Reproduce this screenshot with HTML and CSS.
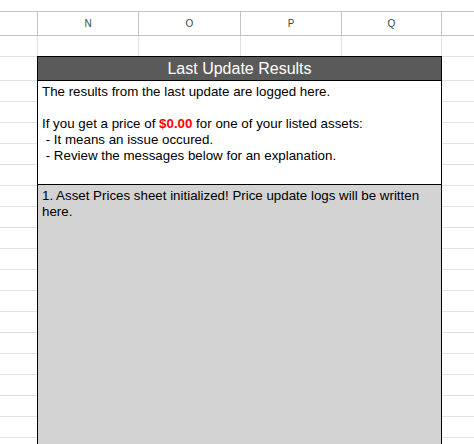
FILE: index.html
```html
<!DOCTYPE html>
<html>
<head>
<meta charset="utf-8">
<link rel="stylesheet" href="styles.css">
</head>
<body>
<div class="sheet">
  <div class="topgap"></div>
  <div class="colhead">
    <div class="c c0"></div>
    <div class="c c1">N</div>
    <div class="c c2">O</div>
    <div class="c c3">P</div>
    <div class="c c4">Q</div>
    <div class="c c5"></div>
  </div>
  <div class="row1">
    <div class="c c0"></div>
    <div class="c c1"></div>
    <div class="c c2"></div>
    <div class="c c3"></div>
    <div class="c c4"></div>
    <div class="c c5"></div>
  </div>
  <div class="main">
    <div class="side side-left">
      <div class="side-first"></div>
      <div class="side-rest"></div>
    </div>
    <div class="box">
      <div class="box-title">Last Update Results</div>
      <div class="box-info">
        <div>The results from the last update are logged here.</div>
        <div>&nbsp;</div>
        <div>If you get a price of <span class="red">$0.00</span> for one of your listed assets:</div>
        <div>&nbsp;- It means an issue occured.</div>
        <div>&nbsp;- Review the messages below for an explanation.</div>
      </div>
      <div class="box-log">
        <div>1. Asset Prices sheet initialized! Price update logs will be written here.</div>
      </div>
    </div>
    <div class="side side-right">
      <div class="side-first"></div>
      <div class="side-rest"></div>
    </div>
  </div>
</div>
</body>
</html>
```

FILE: styles.css
```css
html, body {
  margin: 0;
  padding: 0;
  background: #ffffff;
}
body {
  width: 474px;
  height: 444px;
  overflow: hidden;
  font-family: "Liberation Sans", Arial, sans-serif;
}
.sheet {
  display: flex;
  flex-direction: column;
  width: 474px;
}
.topgap {
  height: 11px;
}
.colhead, .row1 {
  display: flex;
  box-sizing: border-box;
}
.colhead {
  height: 25px;
  border-top: 1px solid #c4c4c4;
  border-bottom: 1px solid #c4c4c4;
}
.row1 {
  height: 20px;
}
.c {
  box-sizing: border-box;
  height: 100%;
  border-right: 1px solid #e2e2e2;
  display: flex;
  align-items: center;
  justify-content: center;
  font-size: 10px;
  color: #444444;
}
.colhead .c {
  border-right-color: #c4c4c4;
}
.c0 { width: 38px; }
.c1 { width: 101px; }
.c2 { width: 102px; }
.c3 { width: 101px; }
.c4 { width: 100px; }
.c5 { flex: 1; border-right: none; }
.main {
  display: flex;
  height: 388px;
}
.side {
  display: flex;
  flex-direction: column;
  border-top: 1px solid #e2e2e2;
}
.side-left { width: 37px; }
.side-right { flex: 1; }
.side-first {
  height: 23px;
  border-bottom: 1px solid #e2e2e2;
}
.side-rest {
  flex: 1;
  background: repeating-linear-gradient(to bottom, transparent 0 20px, #e2e2e2 20px 21px);
}
.box {
  box-sizing: border-box;
  width: 405px;
  border: 1px solid #000000;
  border-bottom: none;
  display: flex;
  flex-direction: column;
  font-size: 13.33px;
  color: #000000;
}
.box-title {
  height: 23px;
  line-height: 23px;
  background: #5a5a5a;
  color: #ffffff;
  font-size: 16px;
  text-align: center;
  border-bottom: 1px solid #000000;
}
.box-info {
  height: 104px;
  box-sizing: border-box;
  padding: 3px 4px 0 4px;
  line-height: 16px;
  background: #ffffff;
  border-bottom: 1px solid #000000;
}
.red {
  color: #ff0000;
  font-weight: bold;
}
.box-log {
  flex: 1;
  background: #d3d3d3;
  padding: 3px 20px 0 4px;
  line-height: 16px;
}
```
